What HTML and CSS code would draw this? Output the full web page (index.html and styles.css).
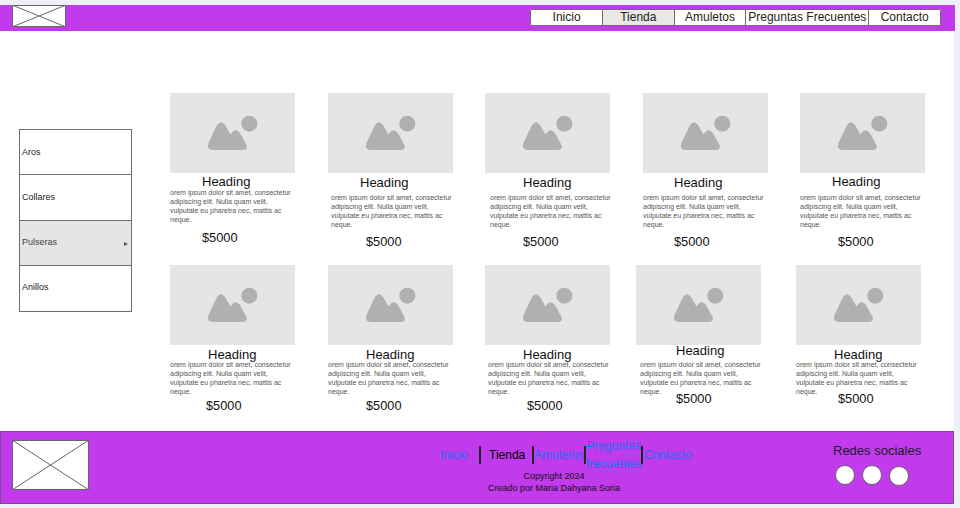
FILE: index.html
```html
<!DOCTYPE html>
<html lang="es">
<head>
    <meta charset="UTF-8">
    <meta name="viewport" content="width=device-width, initial-scale=1.0">
    <title>Tienda</title>
    <link rel="stylesheet" href="styles.css">
</head>
<body>
    <svg class="defs" width="0" height="0">
        <symbol id="foto" viewBox="0 0 125 80">
            <circle cx="79.3" cy="30.7" r="8"/>
            <path d="M43 57H72Q78.500 57 76.500 52L70.500 41Q66 34.500 62 39.500L60.500 41.500L55 32Q51 26.500 47 32L38.500 50Q36 57 43 57Z"/>
        </symbol>
    </svg>

    <div class="page">
        <header class="top">
            <svg class="logo logo-top" viewBox="0 0 54 22" preserveAspectRatio="none">
                <rect x="0.500" y="0.500" width="53" height="21"/>
                <path d="M0 0L54 22M54 0L0 22"/>
            </svg>
            <nav class="menu">
                <a href="#">Inicio</a>
                <a href="#" class="active">Tienda</a>
                <a href="#">Amuletos</a>
                <a href="#" class="wide">Preguntas Frecuentes</a>
                <a href="#">Contacto</a>
            </nav>
        </header>

        <main class="main">
            <aside class="side">
                <a href="#">Aros</a>
                <a href="#">Collares</a>
                <a href="#" class="active">Pulseras <span class="arrow"></span></a>
                <a href="#">Anillos</a>
            </aside>

            <div class="catalog">
                <section class="row row-1">
                    <article class="card a1">
                        <svg class="foto"><use href="#foto"/></svg>
                        <h3>Heading</h3>
                        <p>orem ipsum dolor sit amet, consectetur adipiscing elit. Nulla quam velit, vulputate eu pharetra nec, mattis ac neque.</p>
                        <strong>$5000</strong>
                    </article>
                    <article class="card a2">
                        <svg class="foto"><use href="#foto"/></svg>
                        <h3>Heading</h3>
                        <p>orem ipsum dolor sit amet, consectetur adipiscing elit. Nulla quam velit, vulputate eu pharetra nec, mattis ac neque.</p>
                        <strong>$5000</strong>
                    </article>
                    <article class="card a3">
                        <svg class="foto"><use href="#foto"/></svg>
                        <h3>Heading</h3>
                        <p>orem ipsum dolor sit amet, consectetur adipiscing elit. Nulla quam velit, vulputate eu pharetra nec, mattis ac neque.</p>
                        <strong>$5000</strong>
                    </article>
                    <article class="card a4">
                        <svg class="foto"><use href="#foto"/></svg>
                        <h3>Heading</h3>
                        <p>orem ipsum dolor sit amet, consectetur adipiscing elit. Nulla quam velit, vulputate eu pharetra nec, mattis ac neque.</p>
                        <strong>$5000</strong>
                    </article>
                    <article class="card a5">
                        <svg class="foto"><use href="#foto"/></svg>
                        <h3>Heading</h3>
                        <p>orem ipsum dolor sit amet, consectetur adipiscing elit. Nulla quam velit, vulputate eu pharetra nec, mattis ac neque.</p>
                        <strong>$5000</strong>
                    </article>
                </section>

                <section class="row row-2">
                    <article class="card b1">
                        <svg class="foto"><use href="#foto"/></svg>
                        <h3>Heading</h3>
                        <p>orem ipsum dolor sit amet, consectetur adipiscing elit. Nulla quam velit, vulputate eu pharetra nec, mattis ac neque.</p>
                        <strong>$5000</strong>
                    </article>
                    <article class="card b2">
                        <svg class="foto"><use href="#foto"/></svg>
                        <h3>Heading</h3>
                        <p>orem ipsum dolor sit amet, consectetur adipiscing elit. Nulla quam velit, vulputate eu pharetra nec, mattis ac neque.</p>
                        <strong>$5000</strong>
                    </article>
                    <article class="card b3">
                        <svg class="foto"><use href="#foto"/></svg>
                        <h3>Heading</h3>
                        <p>orem ipsum dolor sit amet, consectetur adipiscing elit. Nulla quam velit, vulputate eu pharetra nec, mattis ac neque.</p>
                        <strong>$5000</strong>
                    </article>
                    <article class="card b4">
                        <svg class="foto"><use href="#foto"/></svg>
                        <h3>Heading</h3>
                        <p>orem ipsum dolor sit amet, consectetur adipiscing elit. Nulla quam velit, vulputate eu pharetra nec, mattis ac neque.</p>
                        <strong>$5000</strong>
                    </article>
                    <article class="card b5">
                        <svg class="foto"><use href="#foto"/></svg>
                        <h3>Heading</h3>
                        <p>orem ipsum dolor sit amet, consectetur adipiscing elit. Nulla quam velit, vulputate eu pharetra nec, mattis ac neque.</p>
                        <strong>$5000</strong>
                    </article>
                </section>
            </div>
        </main>

        <footer class="bottom">
            <svg class="logo logo-bottom" viewBox="0 0 77 50" preserveAspectRatio="none">
                <rect x="0.500" y="0.500" width="76" height="49"/>
                <path d="M0 0L77 50M77 0L0 50"/>
            </svg>
            <div class="foot-center">
                <nav class="foot-menu">
                    <a href="#" class="f-inicio">Inicio</a>
                    <span class="sep"></span>
                    <a href="#" class="f-tienda">Tienda</a>
                    <span class="sep"></span>
                    <a href="#">Amuletos</a>
                    <span class="sep"></span>
                    <a href="#" class="f-preguntas">Preguntas frecuentes</a>
                    <span class="sep"></span>
                    <a href="#" class="f-contacto">Contacto</a>
                </nav>
                <p class="copy">Copyright 2024<br>Creado por Maria Dahyana Soria</p>
            </div>
            <div class="social">
                <h4>Redes sociales</h4>
                <div class="dots">
                    <span></span>
                    <span></span>
                    <span class="low"></span>
                </div>
            </div>
        </footer>
    </div>
</body>
</html>
```

FILE: styles.css
```css
* {
    box-sizing: border-box;
}

html, body {
    height: 100%;
    overflow: hidden;
}

body {
    font-family: "Liberation Sans", Arial, sans-serif;
    background-color: #eef0f8;
    margin: 0;
    padding: 5px 0 0;
    color: #000;
}

a {
    text-decoration: none;
    color: inherit;
}

.defs {
    position: absolute;
}

.page {
    width: 955px;
}

.logo {
    display: block;
    background-color: #fff;
    flex: none;
}

.logo rect, .logo path {
    fill: none;
    stroke: #666;
    stroke-width: 1;
}

/* cabecera */
.top {
    height: 26px;
    background-color: #c13aeb;
    display: flex;
    justify-content: space-between;
    align-items: flex-start;
    padding: 0 14px 0 12px;
}

.logo-top {
    width: 54px;
    height: 22px;
}

.menu {
    display: flex;
    margin-top: 4px;
    height: 17px;
    background-color: #fff;
    border-radius: 2px;
}

.menu a {
    width: 72.700px;
    border: 1px solid #6d6d6d;
    margin-left: -1px;
    text-align: center;
    font-size: 12px;
    line-height: 15px;
    color: #222;
}

.menu a:first-child {
    margin-left: 0;
    border-radius: 2px 0 0 2px;
}

.menu a:last-child {
    border-radius: 0 2px 2px 0;
}

.menu .wide {
    width: 124px;
    white-space: nowrap;
}

.menu .active {
    background-color: #e8e8e8;
}

/* contenido */
.main {
    height: 400px;
    margin-right: 1px;
    background-color: #fff;
    display: flex;
    align-items: flex-start;
}

.side {
    width: 113px;
    margin: 98px 0 0 19px;
    border: 1px solid #6d6d6d;
    flex: none;
}

.side a {
    display: flex;
    justify-content: space-between;
    align-items: center;
    height: 45.300px;
    padding: 0 3px 0 2px;
    font-size: 9px;
    color: #222;
    border-bottom: 1px solid #6d6d6d;
}

.side a:nth-child(3) {
    padding-bottom: 2px;
}

.side a:last-child {
    padding-bottom: 3px;
    border-bottom: none;
}

.side .active {
    background-color: #e5e5e5;
    color: #444;
}

.arrow {
    width: 0;
    height: 0;
    margin-top: 4px;
    border-left: 4px solid #555;
    border-top: 2.500px solid transparent;
    border-bottom: 2.500px solid transparent;
}

.catalog {
    margin-left: 38px;
    padding-top: 62px;
}

.row {
    display: flex;
    height: 172px;
}

.card {
    width: 125px;
    flex: none;
    margin-right: var(--gap, 32.500px);
}

.foto {
    display: block;
    width: 125px;
    height: 80px;
    background-color: #e5e5e5;
    fill: #b0b0b0;
}

.card h3 {
    margin: var(--hy, 0px) 0 0;
    padding: 1px 0 0 var(--hx, 32px);
    font-size: 13px;
    font-weight: 400;
    line-height: 16px;
    color: #111;
}

.card p {
    margin: calc(var(--ty, 3px) - 1px) 0 0;
    padding-left: var(--tx, 0px);
    width: calc(var(--tx, 0px) + 123px);
    font-size: 7px;
    line-height: 9px;
    color: #555;
}

.card strong {
    display: block;
    margin-top: var(--py, 5px);
    padding-left: var(--px, 32px);
    font-size: 12.800px;
    font-weight: 400;
    line-height: 16px;
    color: #111;
}

/* cada tarjeta va un poco movida en el boceto */
.a1 { --gap: 33px; --ty: -1px; --py: 6px; }
.a2 { --hy: 1px; --hx: 32px; --tx: 3px; --px: 38px; --gap: 32px; }
.a3 { --hy: 1px; --hx: 38px; --tx: 5px; --px: 38px; --gap: 33px; }
.a4 { --hy: 1px; --hx: 31px; --px: 31px; --gap: 32px; }
.a5 { --hx: 32px; --ty: 4px; --px: 38px; }

.b1 { --hy: 1px; --hx: 38px; --ty: -2px; --px: 36px; --py: 2px; --gap: 33px; }
.b2 { --hy: 1px; --hx: 38px; --ty: -2px; --px: 38px; --py: 2px; --gap: 32px; }
.b3 { --hy: 1px; --hx: 38px; --ty: -2px; --tx: 3px; --px: 42px; --py: 2px; --gap: 26px; }
.b4 { --hy: -3px; --hx: 40px; --ty: 2px; --tx: 4px; --px: 40px; --py: -5px; --gap: 35px; }
.b5 { --hy: 1px; --hx: 38px; --ty: -2px; --px: 42px; --py: -5px; }

/* pie */
.bottom {
    height: 73px;
    margin-right: 1px;
    background-color: #c13aeb;
    border: 1px solid #7c4a8c;
    display: flex;
    align-items: flex-start;
    padding: 8px 0 0 11px;
}

.logo-bottom {
    width: 77px;
    height: 50px;
}

.foot-center {
    width: 254px;
    margin-left: 351px;
}

.foot-menu {
    display: flex;
    align-items: center;
    height: 30px;
    font-size: 12px;
    color: #1f6ff2;
}

.foot-menu a {
    white-space: nowrap;
}

.sep {
    width: 2px;
    height: 18px;
    background-color: #222;
    flex: none;
}

.f-inicio {
    width: 39px;
}

.foot-menu .f-tienda {
    width: 51px;
    padding-left: 8px;
    color: #000;
}

.foot-menu .f-preguntas {
    width: 55px;
    text-align: center;
    line-height: 18px;
    white-space: normal;
}

.f-contacto {
    margin-left: 1px;
}

.copy {
    margin: 0;
    width: 228px;
    text-align: center;
    font-size: 9px;
    line-height: 12px;
    color: #111;
    white-space: nowrap;
}

.social {
    margin-left: 139px;
}

.social h4 {
    margin: 3px 0 0;
    font-size: 13px;
    font-weight: 400;
    line-height: 16px;
    color: #1a1a2a;
    white-space: nowrap;
}

.dots {
    display: flex;
    gap: 7px;
    margin: 6px 0 0 2px;
}

.dots span {
    width: 20px;
    height: 20px;
    border-radius: 50%;
    background-color: #fff;
    border: 1px solid #666;
}

.dots .low {
    margin-top: 1px;
}
```
